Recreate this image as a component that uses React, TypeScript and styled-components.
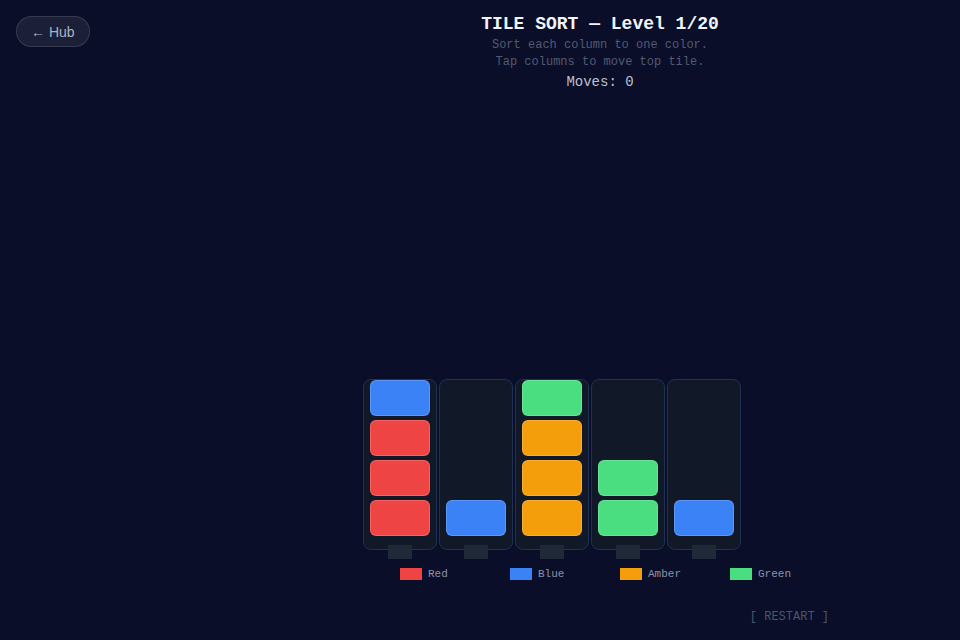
import styled, { createGlobalStyle } from "styled-components";

const GlobalStyle = createGlobalStyle`
  html, body {
    margin: 0;
    padding: 0;
    background: #0a0e28;
  }
  * {
    box-sizing: border-box;
  }
`;

const MONO = `"Liberation Mono", "Courier New", monospace`;

type Color = "red" | "blue" | "amber" | "green";

const palette: Record<Color, string> = {
  red: "#ef4444",
  blue: "#3b82f6",
  amber: "#f59e0b",
  green: "#4ade80",
};

// bottom -> top
const columns: Color[][] = [
  ["red", "red", "red", "blue"],
  ["blue"],
  ["amber", "amber", "amber", "green"],
  ["green", "green"],
  ["blue"],
];

const legend: { color: Color; label: string }[] = [
  { color: "red", label: "Red" },
  { color: "blue", label: "Blue" },
  { color: "amber", label: "Amber" },
  { color: "green", label: "Green" },
];

const App = () => {
  return (
    <Page>
      <GlobalStyle />
      <Side>
        <HubButton>← Hub</HubButton>
      </Side>
      <Stage>
        <Header>
          <Title>TILE SORT — Level 1/20</Title>
          <Hint>
            Sort each column to one color.
            <br />
            Tap columns to move top tile.
          </Hint>
          <Moves>Moves: 0</Moves>
        </Header>
        <Spacer />
        <Board>
          {columns.map((tiles, i) => (
            <Column key={i}>
              {[...tiles].reverse().map((c, j) => (
                <Tile key={j} $color={palette[c]} />
              ))}
              <Foot />
            </Column>
          ))}
        </Board>
        <Legend>
          {legend.map((item) => (
            <LegendItem key={item.label}>
              <Swatch $color={palette[item.color]} />
              {item.label}
            </LegendItem>
          ))}
        </Legend>
        <Restart>[ RESTART ]</Restart>
      </Stage>
    </Page>
  );
};

export default App;

const Page = styled.div`
  display: grid;
  grid-template-columns: 240px 1fr;
  height: 100vh;
  background: #0a0e28;
  font-family: ${MONO};
`;

const Side = styled.div`
  padding: 16px;
`;

const HubButton = styled.button`
  height: 31px;
  padding: 0 14px;
  border-radius: 16px;
  border: 1px solid rgba(255, 255, 255, 0.13);
  background: rgba(255, 255, 255, 0.07);
  color: #aab3c6;
  font-family: "Liberation Sans", Arial, sans-serif;
  font-size: 14px;
  cursor: pointer;
`;

const Stage = styled.div`
  width: 480px;
  margin: 0 auto;
  height: 100%;
  display: flex;
  flex-direction: column;
  padding-bottom: 12px;
`;

const Header = styled.div`
  display: flex;
  flex-direction: column;
  align-items: center;
  text-align: center;
  padding-top: 14px;
`;

const Title = styled.div`
  font-size: 18px;
  line-height: 20px;
  font-weight: bold;
  color: #f1f5f9;
`;

const Hint = styled.div`
  margin-top: 3px;
  font-size: 12px;
  line-height: 17px;
  color: #515b73;
`;

const Moves = styled.div`
  margin-top: 2px;
  font-size: 14px;
  line-height: 18px;
  color: #b9c2d0;
`;

const Spacer = styled.div`
  flex: 1;
`;

const Board = styled.div`
  display: flex;
  gap: 2px;
  margin-left: 3px;
`;

const Column = styled.div`
  position: relative;
  width: 74px;
  height: 171px;
  display: flex;
  flex-direction: column;
  justify-content: flex-end;
  gap: 4px;
  padding: 0 6px 13px;
  background: #111827;
  border: 1px solid #1e3354;
  border-radius: 8px;
  cursor: pointer;
`;

const Tile = styled.div<{ $color: string }>`
  width: 60px;
  height: 36px;
  border-radius: 6px;
  background: ${(p) => p.$color};
  box-shadow: inset 0 0 0 1px rgba(255, 255, 255, 0.18);
`;

const Foot = styled.div`
  position: absolute;
  left: 50%;
  bottom: -10px;
  width: 24px;
  height: 14px;
  margin-left: -12px;
  background: #202937;
`;

const Legend = styled.div`
  display: grid;
  grid-template-columns: repeat(4, 110px);
  justify-content: flex-end;
  margin-top: 17px;
`;

const LegendItem = styled.div`
  display: flex;
  align-items: center;
  gap: 6px;
  height: 14px;
  font-size: 11px;
  color: #8a93a8;
`;

const Swatch = styled.span<{ $color: string }>`
  width: 22px;
  height: 12px;
  background: ${(p) => p.$color};
`;

const Restart = styled.button`
  align-self: flex-end;
  margin-top: 25px;
  padding: 4px 11px;
  background: none;
  border: none;
  font-family: ${MONO};
  font-size: 12px;
  line-height: 14px;
  color: #4b566e;
  cursor: pointer;
`;
